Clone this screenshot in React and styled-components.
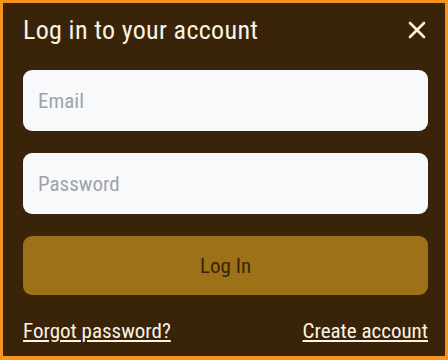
import React, { useState } from "react";
import styled, { createGlobalStyle } from "styled-components";

const GlobalStyle = createGlobalStyle`
  html, body {
    margin: 0;
    padding: 0;
    background: #3a2409;
  }
  * {
    box-sizing: border-box;
  }
`;

const Panel = styled.div`
  width: 448px;
  height: 360px;
  background: #3a2409;
  border: 3px solid #f6941f;
  border-bottom-width: 4px;
  padding: 12px 17px 0 20px;
  font-family: "Roboto Condensed", Roboto, "Liberation Sans", sans-serif;
  font-stretch: condensed;
  display: flex;
  flex-direction: column;
`;

const Header = styled.div`
  display: flex;
  align-items: center;
  justify-content: space-between;
  height: 30px;
  margin-bottom: 25px;
`;

const Title = styled.h2`
  margin: 0;
  font-size: 26px;
  font-weight: 400;
  letter-spacing: 0.35px;
  color: #fbf3e3;
`;

const CloseButton = styled.button`
  background: none;
  border: none;
  padding: 0;
  width: 22px;
  height: 22px;
  display: flex;
  align-items: center;
  justify-content: center;
  color: #fbf3e3;
  cursor: pointer;
`;

const Form = styled.form`
  display: flex;
  flex-direction: column;
  gap: 22px;
`;

const Input = styled.input`
  width: 100%;
  height: 61px;
  border: none;
  border-radius: 9px;
  background: #f8f9fb;
  padding: 0 15px;
  font-family: inherit;
  font-stretch: inherit;
  font-size: 21px;
  color: #222;
  outline: none;
  &::placeholder {
    color: #9ea3ad;
  }
`;

const SubmitButton = styled.button`
  width: 100%;
  height: 59px;
  border: none;
  border-radius: 9px;
  background: #9c7117;
  color: #3a2409;
  font-family: inherit;
  font-stretch: inherit;
  font-size: 21px;
  cursor: pointer;
`;

const Links = styled.div`
  display: flex;
  justify-content: space-between;
  margin-top: 24px;
`;

const Link = styled.a`
  color: #fbf3e3;
  font-size: 21px;
  text-decoration: underline;
  text-underline-offset: 2px;
  cursor: pointer;
`;

const CloseIcon = () => (
  <svg width="20" height="20" viewBox="0 0 20 20" fill="none">
    <path
      d="M3 3L17 17M17 3L3 17"
      stroke="currentColor"
      strokeWidth="2.6"
      strokeLinecap="round"
    />
  </svg>
);

export default function App() {
  const [email, setEmail] = useState("");
  const [password, setPassword] = useState("");

  return (
    <>
      <GlobalStyle />
      <Panel>
        <Header>
          <Title>Log in to your account</Title>
          <CloseButton aria-label="Close">
            <CloseIcon />
          </CloseButton>
        </Header>
        <Form onSubmit={(e) => e.preventDefault()}>
          <Input
            type="email"
            placeholder="Email"
            value={email}
            onChange={(e) => setEmail(e.target.value)}
          />
          <Input
            type="password"
            placeholder="Password"
            value={password}
            onChange={(e) => setPassword(e.target.value)}
          />
          <SubmitButton type="submit">Log In</SubmitButton>
        </Form>
        <Links>
          <Link>Forgot password?</Link>
          <Link>Create account</Link>
        </Links>
      </Panel>
    </>
  );
}
